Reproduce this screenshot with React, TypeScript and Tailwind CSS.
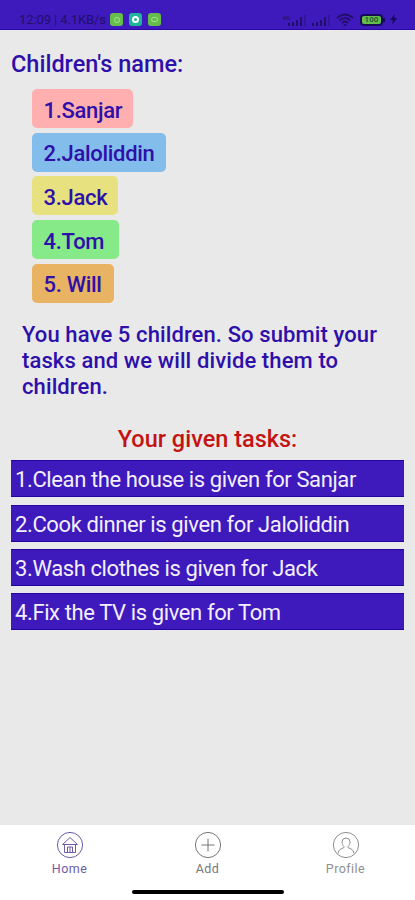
import type { ReactNode } from "react";

const children = [
  { label: "1.Sanjar", style: "w-[101px] bg-[#ffafaf]" },
  { label: "2.Jaloliddin", style: "w-[134px] bg-[#82bdec]" },
  { label: "3.Jack", style: "w-[86px] bg-[#e8e17f]" },
  { label: "4.Tom", style: "w-[87px] bg-[#87ea89]" },
  { label: "5. Will", style: "w-[82px] bg-[#e9b364]" },
];

const tasks = [
  "1.Clean the house is given for Sanjar",
  "2.Cook dinner is given for Jaloliddin",
  "3.Wash clothes is given for Jack",
  "4.Fix the TV is given for Tom",
];

const Signal = () => (
  <svg width="19" height="12" viewBox="0 0 19 12" fill="#20106a">
    <path d="M0 9h2v3H0zM4 8h2v4H4zM8 6h2v6H8zM12 3h2v9h-2z" />
    <path d="M16 1h2v11h-2z" opacity=".4" />
  </svg>
);

const StatusBar = () => (
  <header className="flex h-[30px] items-end border-b border-[#2c08a4] bg-[#3e19bb] pb-[1px] text-[#20106a]">
    <div className="flex h-[17px] items-center pl-[19px]">
      <span className="w-[91px] whitespace-nowrap text-[13px] tracking-[-0.1px]">
        12:09 | 4.1KB/s
      </span>
      <div className="flex gap-[6px]">
        <span className="flex h-[13px] w-[13px] items-center justify-center rounded-[3px] bg-[#64be49]">
          <span className="h-[6px] w-[6px] rounded-full border border-[#a4e58f]" />
        </span>
        <span className="flex h-[13px] w-[13px] items-center justify-center rounded-[3px] bg-[#20b49d]">
          <span className="h-[7px] w-[7px] rounded-full border-2 border-white" />
        </span>
        <span className="flex h-[13px] w-[13px] items-center justify-center rounded-[3px] bg-[#64be49]">
          <span className="h-[5px] w-[7px] rounded-full border border-[#a4e58f]" />
        </span>
      </div>
    </div>
    <div className="ml-auto flex h-[17px] items-center pr-[18px]">
      <span className="mr-[5px] flex items-end">
        <span className="-mr-[2px] mb-[5px] text-[6px] leading-none">4G</span>
        <Signal />
      </span>
      <Signal />
      <svg className="ml-[5px]" width="18" height="14" viewBox="0 0 18 14" fill="none" stroke="currentColor">
        <path d="M1 5Q9-2 17 5M3.5 7.5q5.500-5 11 0M6 10q3-3 6 0" strokeWidth="2" />
        <path d="M9 11v2" strokeWidth="2.500" />
      </svg>
      <span className="ml-[6px] flex h-[12px] w-[23px] items-center justify-center rounded-[4px] border-2 border-[#160b58] bg-[#64be49] text-[8px] font-bold leading-none text-[#245d38]">
        100
      </span>
      <span className="h-1 w-[2px] bg-[#160b58]" />
      <svg className="ml-[5px]" width="7" height="11" viewBox="0 0 7 11" fill="#160b58">
        <path d="M5 0 0 6h3L2 11l5-7H4z" />
      </svg>
    </div>
  </header>
);

const NavItem = ({ label, color, children }: { label: string; color: string; children: ReactNode }) => (
  <button className={`flex w-[138px] flex-col items-center ${color}`}>
    <svg width="28" height="28" viewBox="0 0 28 28" fill="none" stroke="currentColor" strokeWidth="1">
      <circle cx="14" cy="14" r="12.600" />
      {children}
    </svg>
    <span className="mt-[2px] text-[12.500px] leading-[16px] tracking-[0.45px]">{label}</span>
  </button>
);

export default function App() {
  return (
    <div className="flex h-[900px] w-[415px] flex-col overflow-hidden bg-[#e9e9e9] font-['Roboto',sans-serif]">
      <StatusBar />

      <main className="flex-1 px-[11px] pt-[20px] text-[#2e0faa]">
        <h1 className="h-[39px] whitespace-nowrap text-[23.500px] font-medium leading-[28px]">
          Children's name:
        </h1>

        <ul className="flex flex-col gap-[4.700px] pl-[21px]">
          {children.map((child) => (
            <li
              key={child.label}
              className={`flex h-[39px] items-center whitespace-nowrap rounded-[5px] pl-[11.500px] pt-[3px] text-[22px] font-medium tracking-[-0.300px] ${child.style}`}
            >
              {child.label}
            </li>
          ))}
        </ul>

        <p className="mt-[19.600px] h-[103px] whitespace-nowrap pl-[11px] text-[22px] font-medium leading-[26px] tracking-[0.110px]">
          You have 5 children. So submit your
          <br />
          tasks and we will divide them to
          <br />
          children.
        </p>

        <h2 className="h-[35px] whitespace-nowrap text-center text-[23.500px] font-medium leading-[28px] text-[#c41313]">
          Your given tasks:
        </h2>

        <ul className="flex flex-col gap-[7.300px]">
          {tasks.map((task) => (
            <li
              key={task}
              className="flex h-[37px] items-center whitespace-nowrap border-y border-[#2404a0] bg-[#3e19bb] pl-[4px] pt-[2px] text-[22px] tracking-[-0.390px] text-[#f3efff]"
            >
              {task}
            </li>
          ))}
        </ul>
      </main>

      <footer className="flex h-[75px] flex-col items-center bg-white">
        <nav className="flex h-[65px] pt-[6px]">
          <NavItem label="Home" color="text-[#6d5da9]">
            <path d="M6.500 13.500 14 6.500l7.500 7zM8.500 13.500v8h11v-8M11.500 21.500v-5.500h5v5.500M14 16v5.500" />
          </NavItem>
          <NavItem label="Add" color="text-[#777777]">
            <path d="M14 7.500v13M7.500 14h13" />
          </NavItem>
          <NavItem label="Profile" color="text-[#909090]">
            <path d="M10 11a4 4 0 0 1 8 0c0 2-1 3.500-2 4.500v1l4 2q1.500 1 2 4M10 11c0 2 1 3.500 2 4.500v1l-4 2q-1.500 1-2 4" />
          </NavItem>
        </nav>
        <div className="h-[4px] w-[152px] rounded-full bg-black" />
      </footer>
    </div>
  );
}
